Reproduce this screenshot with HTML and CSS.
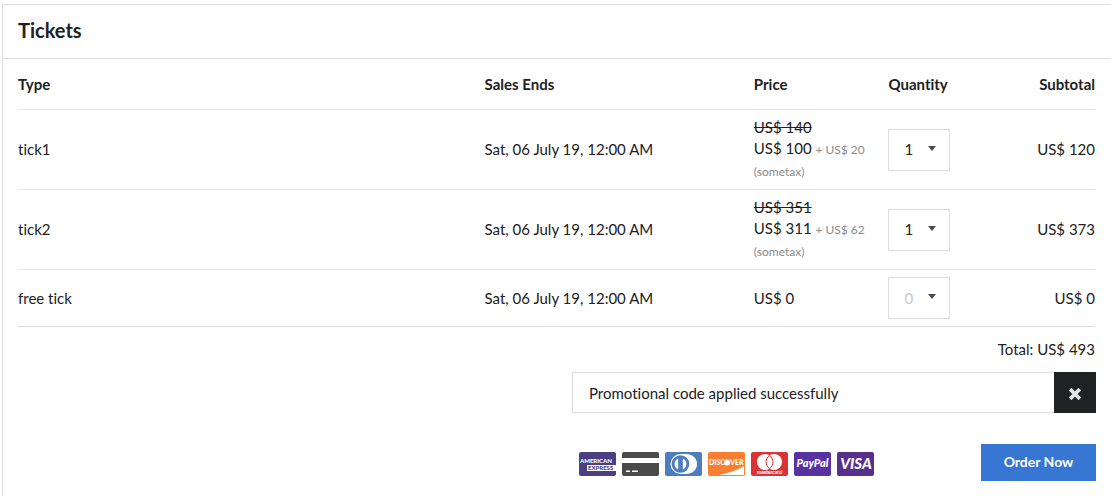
FILE: index.html
```html
<!DOCTYPE html>
<html lang="en">
<head>
<meta charset="utf-8">
<meta name="viewport" content="width=device-width, initial-scale=1">
<title>Tickets</title>
<link rel="stylesheet" href="styles.css">
</head>
<body>
<main class="panel">
  <h1 class="panel-title">Tickets</h1>
  <div class="table-wrap">
    <table class="tickets">
      <thead>
        <tr>
          <th class="col-type" scope="col">Type</th>
          <th class="col-ends" scope="col">Sales Ends</th>
          <th class="col-price" scope="col">Price</th>
          <th class="col-qty" scope="col">Quantity</th>
          <th class="col-sub" scope="col">Subtotal</th>
        </tr>
      </thead>
      <tbody>
        <tr>
          <td>tick1</td>
          <td>Sat, 06 July 19, 12:00 AM</td>
          <td class="price"><del>US$ 140</del><div>US$ 100 <small>+ US$ 20 (sometax)</small></div></td>
          <td><div class="qty"><select aria-label="Quantity of tick1"><option>0</option><option selected>1</option></select><svg class="caret" viewBox="0 0 8 5" aria-hidden="true"><path d="M0 0h8L4 5z"/></svg></div></td>
          <td class="col-sub">US$ 120</td>
        </tr>
        <tr>
          <td>tick2</td>
          <td>Sat, 06 July 19, 12:00 AM</td>
          <td class="price"><del>US$ 351</del><div>US$ 311 <small>+ US$ 62 (sometax)</small></div></td>
          <td><div class="qty"><select aria-label="Quantity of tick2"><option>0</option><option selected>1</option></select><svg class="caret" viewBox="0 0 8 5" aria-hidden="true"><path d="M0 0h8L4 5z"/></svg></div></td>
          <td class="col-sub">US$ 373</td>
        </tr>
        <tr>
          <td>free tick</td>
          <td>Sat, 06 July 19, 12:00 AM</td>
          <td>US$ 0</td>
          <td><div class="qty"><select class="empty" aria-label="Quantity of free tick"><option selected>0</option><option>1</option></select><svg class="caret" viewBox="0 0 8 5" aria-hidden="true"><path d="M0 0h8L4 5z"/></svg></div></td>
          <td class="col-sub">US$ 0</td>
        </tr>
      </tbody>
    </table>
  </div>
  <p class="total">Total: US$ 493</p>
  <div class="promo">
    <input class="promo-input" type="text" value="Promotional code applied successfully" aria-label="Promotional code" readonly>
    <button class="promo-clear" type="button" aria-label="Remove promotional code">
      <svg width="12" height="12" viewBox="0 0 12 12" aria-hidden="true"><path d="M2.500 2.500l7 7M9.500 2.500l-7 7" fill="none" stroke="#e4e4e4" stroke-width="3.800" stroke-linecap="square" stroke-linejoin="round"/></svg>
    </button>
  </div>
  <div class="checkout">
    <div class="cards">
      <svg class="card" viewBox="0 0 37 24" role="img" aria-label="American Express"><rect width="37" height="24" rx="2" fill="#4b3f84"/><text class="mark" x="1" y="11" font-size="6">AMERICAN</text><path d="M8 13h29v6H8z" fill="#fff"/><text class="mark ink" x="9" y="18" font-size="6">EXPRESS</text></svg>
      <svg class="card" viewBox="0 0 37 24" role="img" aria-label="Credit card"><rect width="37" height="24" rx="2" fill="#4a4a4a"/><path d="M0 6h37v5H0zM4 18.500h4v1.500H4zM10 18.500h6v1.500h-6z" fill="#fff"/></svg>
      <svg class="card" viewBox="0 0 37 24" role="img" aria-label="Diners Club"><rect width="37" height="24" rx="2" fill="#4e7dbe"/><path d="M15 2h6c6 0 11 4 11 10s-5 10-11 10h-6z" fill="#fff"/><circle cx="15.500" cy="12" r="10" fill="#fff"/><circle cx="15.500" cy="12" r="8.800" fill="#4e7dbe"/><path d="M13.200 6.500a6 6 0 0 0 0 11zM17.800 6.500a6 6 0 0 1 0 11z" fill="#fff"/></svg>
      <svg class="card" viewBox="0 0 37 24" role="img" aria-label="Discover"><rect width="37" height="24" rx="2" fill="#fa7e30"/><path d="M11 23Q26 20 36 14v9z" fill="#fff"/><g class="mark" font-size="7"><text x="1" y="13">DISC</text><text x="22" y="13">VER</text></g><circle cx="19" cy="10.500" r="3" fill="#fff"/></svg>
      <svg class="card" viewBox="0 0 37 24" role="img" aria-label="Mastercard"><rect width="37" height="24" rx="2" fill="#db3236"/><circle cx="14" cy="10" r="8" fill="#fff"/><circle cx="23" cy="10" r="8" fill="#fff"/><path d="M18.500 3.400a8 8 0 0 1 0 13.200 8 8 0 0 1 0-13.200z" fill="#fff" stroke="#db3236" stroke-width="1"/><text class="mark" x="18.500" y="22" font-size="5" text-anchor="middle">mastercard</text></svg>
      <svg class="card" viewBox="0 0 37 24" role="img" aria-label="PayPal"><rect width="37" height="24" rx="2" fill="#5732a0"/><text class="mark slant" x="18.500" y="15" font-size="11" text-anchor="middle">PayPal</text></svg>
      <svg class="card" viewBox="0 0 37 24" role="img" aria-label="Visa"><rect width="37" height="24" rx="2" fill="#572f8c"/><text class="mark slant" x="19" y="17" font-size="15" text-anchor="middle">VISA</text></svg>
    </div>
    <button class="order" type="button">Order Now</button>
  </div>
</main>
</body>
</html>
```
FILE: styles.css
```css
* { box-sizing: border-box; }

body {
  margin: 0;
  padding: 4px 0 0 2px;
  background: #fff;
  color: #212121;
  font: 15px/21px Lato, sans-serif;
  font-variant-ligatures: none;
}

.panel {
  border: 1px solid #dcdddd;
  border-width: 1px 0 0 1px;
  min-height: calc(100vh - 4px);
}

.panel-title {
  margin: 0;
  padding: 11px 15px 14px;
  border-bottom: 1px solid #dcdddd;
  font-size: 20px;
  line-height: 28px;
  font-weight: 700;
}

.table-wrap { padding: 0 16px 0 15px; }

.tickets {
  width: 100%;
  table-layout: fixed;
  border-collapse: separate;
  border-spacing: 0;
}

.tickets th,
.tickets td {
  padding: 7px 11px;
  border-bottom: 1px solid #e6e6e6;
  text-align: left;
  vertical-align: middle;
}

.tickets th { height: 51px; font-weight: 700; }
.tickets tbody tr:last-child td { border-bottom-color: #dcdddd; }
.tickets tr > :first-child { padding-left: 0; }
.tickets tr > :last-child { padding-right: 0; text-align: right; }

.col-type { width: 42.3%; }
.col-ends { width: 25%; }
.col-price { width: 12.5%; }
.col-qty { width: 8%; }

.tickets .price { height: 80px; }
.price del, .price div { display: block; }
.price small { color: #8a8a8a; font-size: 12px; }

.qty { position: relative; width: 62px; }

.qty select {
  display: block;
  width: 100%;
  height: 42px;
  padding: 0 15px;
  border: 1px solid #dcdddd;
  border-radius: 0;
  background: #fff;
  color: #212121;
  font: inherit;
  appearance: none;
}

.qty .empty { color: #c7c7c7; }

.caret {
  position: absolute;
  top: 17px;
  right: 14px;
  width: 8px;
  height: 5px;
  fill: #4a4a4a;
  pointer-events: none;
}

.total {
  margin: 12px 16px 12px 0;
  text-align: right;
}

.promo {
  display: flex;
  width: 524px;
  max-width: 100%;
  margin: 0 15px 31px auto;
}

.promo-input {
  flex: 1;
  min-width: 0;
  height: 41px;
  padding: 0 16px;
  border: 1px solid #dcdddd;
  border-right: 0;
  color: #212121;
  font: inherit;
  font-variant-ligatures: none;
}

.promo-clear {
  display: grid;
  place-items: center;
  width: 42px;
  padding: 3px 0 0;
  border: 0;
  background: #202122;
}

.checkout {
  display: flex;
  justify-content: flex-end;
  align-items: center;
  gap: 107px;
  margin-right: 15px;
}

.cards { display: flex; gap: 6px; padding-top: 2px; }
.card { width: 37px; height: 24px; }
.mark { fill: #fff; font-family: Lato, sans-serif; font-weight: 900; }
.ink { fill: #4b3f84; }
.slant { font-style: italic; }

.order {
  width: 115px;
  height: 37px;
  padding: 0 0 2px;
  border: 0;
  background: #3876d3;
  color: #fff;
  font: 700 14px/21px Lato, sans-serif;
}
```
